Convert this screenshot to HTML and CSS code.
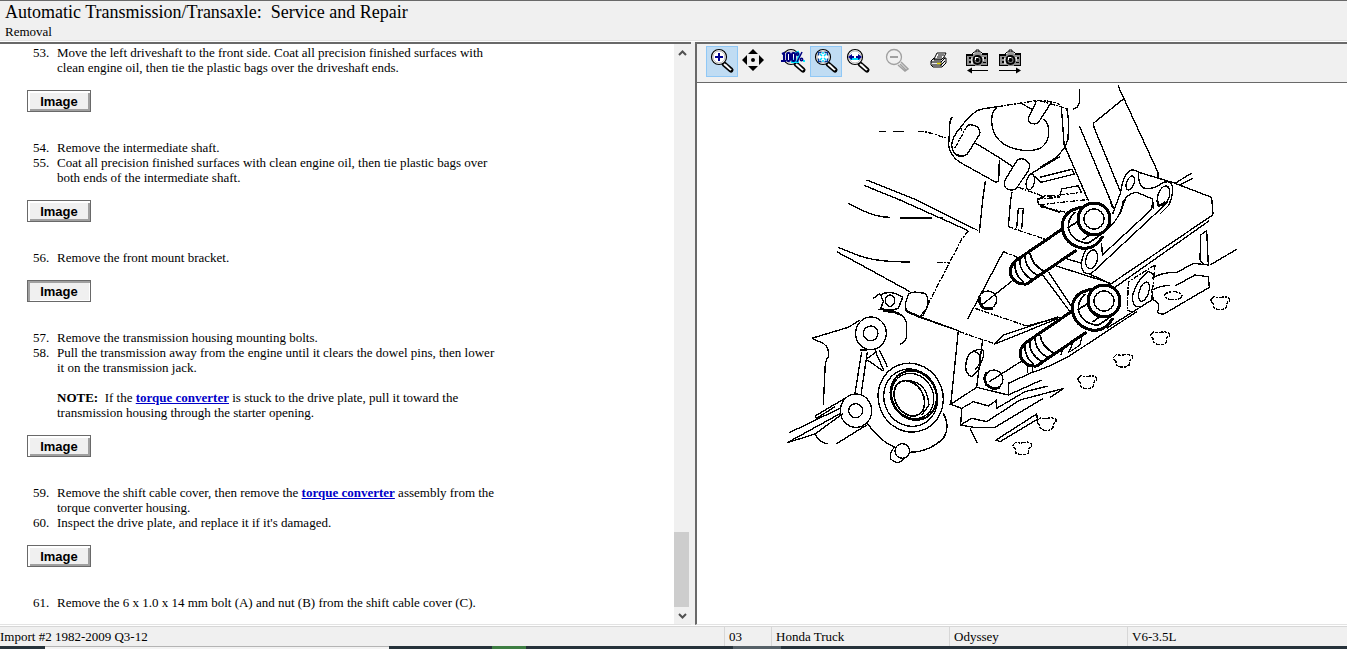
FILE: index.html
```html
<!DOCTYPE html>
<html lang="en">
<head>
<meta charset="utf-8">
<title>Automatic Transmission/Transaxle: Service and Repair</title>
<link rel="stylesheet" href="styles.css">
</head>
<body>
<header class="header">
  <h1 class="title">Automatic Transmission/Transaxle:&nbsp; Service and Repair</h1>
  <p class="subtitle">Removal</p>
</header>
<main class="panes">
  <section class="article">
    <div class="steps-wrap">
      <ol class="steps">
        <li class="step"><span class="num">53.</span><p>Move the left driveshaft to the front side. Coat all precision finished surfaces with clean engine oil, then tie the plastic bags over the driveshaft ends.</p></li>
      </ol>
      <button class="image-btn" type="button">Image</button>
      <ol class="steps">
        <li class="step"><span class="num">54.</span><p>Remove the intermediate shaft.</p></li>
        <li class="step"><span class="num">55.</span><p>Coat all precision finished surfaces with clean engine oil, then tie plastic bags over both ends of the intermediate shaft.</p></li>
      </ol>
      <button class="image-btn" type="button">Image</button>
      <ol class="steps">
        <li class="step"><span class="num">56.</span><p>Remove the front mount bracket.</p></li>
      </ol>
      <button class="image-btn pressed" type="button">Image</button>
      <ol class="steps">
        <li class="step"><span class="num">57.</span><p>Remove the transmission housing mounting bolts.</p></li>
        <li class="step"><span class="num">58.</span><div><p>Pull the transmission away from the engine until it clears the dowel pins, then lower it on the transmission jack.</p><p class="note"><b>NOTE:</b>&nbsp; If the <a href="#tc">torque converter</a> is stuck to the drive plate, pull it toward the transmission housing through the starter opening.</p></div></li>
      </ol>
      <button class="image-btn" type="button">Image</button>
      <ol class="steps">
        <li class="step"><span class="num">59.</span><p>Remove the shift cable cover, then remove the <a href="#tc">torque converter</a> assembly from the torque converter housing.</p></li>
        <li class="step"><span class="num">60.</span><p>Inspect the drive plate, and replace it if it's damaged.</p></li>
      </ol>
      <button class="image-btn" type="button">Image</button>
      <ol class="steps">
        <li class="step"><span class="num">61.</span><p>Remove the 6 x 1.0 x 14 mm bolt (A) and nut (B) from the shift cable cover (C).</p></li>
      </ol>
    </div>
    <div class="scrollbar">
      <button class="scroll-btn" type="button" aria-label="Scroll up"><svg width="9" height="6" viewBox="0 0 9 6"><path d="M1 5l3.500-3.500L8 5" fill="none" stroke="#505050" stroke-width="2"/></svg></button>
      <div class="track"><div class="thumb"></div></div>
      <button class="scroll-btn" type="button" aria-label="Scroll down"><svg width="9" height="6" viewBox="0 0 9 6"><path d="M1 1l3.500 3.500L8 1" fill="none" stroke="#505050" stroke-width="2"/></svg></button>
    </div>
  </section>
  <section class="viewer">
    <svg class="defs" width="0" height="0" aria-hidden="true">
      <defs>
        <g id="glass">
          <path d="M17 17l7 6" stroke="#000" stroke-width="5" stroke-linecap="round"/>
          <path d="M17 17l7 6" stroke="#fff" stroke-width="2"/>
          <path d="M19 17l6 6" stroke="#777" stroke-width="1"/>
          <circle cx="12" cy="10" r="7.500" fill="#fff" stroke="#000" stroke-width="1.200"/>
          <circle cx="12" cy="10" r="6" fill="none" stroke="#b8b8b8"/>
        </g>
        <g id="camera">
          <path d="M6 5l2-2h7l3 3M10 3V1h3v2" fill="none" stroke="#000"/>
          <path d="M9 3h5l2 3H8z" fill="#999"/>
          <path d="M0 5h22v12H0z" fill="#909090"/>
          <path d="M0 5h7v2H0zM16 4h6v2h-6zM3 8h2v2H3zM3 12h2v2H3zM0 16h9v1H0zM15 16h7v1h-7zM18 8h2v2h-2zM17 13h3v1h-3zM21 6h1v11h-1zM0 7h1v10H0z" fill="#000"/>
          <path d="M5 9h2v6H5zM16 8h2v4h-2z" fill="#ddd"/>
          <circle cx="11.500" cy="11" r="5" fill="#000"/>
          <circle cx="11.500" cy="11" r="3" fill="#888"/>
          <circle cx="11.500" cy="11" r="2" fill="#000"/>
          <path d="M9 8h3v1h-2v2H9z" fill="#fff"/>
        </g>
      </defs>
    </svg>
    <div class="toolbar">
      <button class="tool active" type="button" aria-label="Zoom in"><svg viewBox="0 0 30 29"><use href="#glass"/><path d="M12 6v8M8 10h8" stroke="#000090" stroke-width="2"/></svg></button>
      <button class="tool gap-after" type="button" aria-label="Pan"><svg viewBox="0 0 30 29"><path d="M14 2l5 5H9zM14 24l5-5H9zM3 13l5-5v10zM25 13l-5-5v10zM12 13a2 2 0 1 0 4 0a2 2 0 1 0-4 0" fill="#000"/></svg></button>
      <button class="tool" type="button" aria-label="Zoom to 100%"><svg viewBox="0 0 30 29"><use href="#glass"/><path d="M17 6l2-1 1 3-2 7-3-1zM12 15h8M24 14h2" stroke="#00e8ff" stroke-width="2" fill="none"/><g fill="none" stroke="#000080" stroke-width="2"><path d="M3 7l2-1v8M2 14h5"/><rect x="8" y="6" width="3" height="8" rx="1"/><rect x="13" y="6" width="3" height="8" rx="1"/><path d="M23 5l-5 10" stroke-width="1.500"/><circle cx="18.500" cy="7" r="1.200" stroke-width="1.500"/><circle cx="22.500" cy="12.500" r="1.200" stroke-width="1.500"/></g></svg></button>
      <button class="tool active" type="button" aria-label="Fit to window"><svg viewBox="0 0 30 29"><use href="#glass"/><g fill="none"><path d="M9 7l2 2M15 7l-2 2M9 13l2-2M15 13l-2-2M12 5v2M12 13v2" stroke="#00dcff" stroke-width="1.500"/><path d="M7.500 8.500v-3h3M13.500 5.500h3v3M7.500 11.500v3h3M13.500 14.500h3v-3" stroke="#0a3f9c" stroke-width="1.300"/></g></svg></button>
      <button class="tool gap-after" type="button" aria-label="Fit width"><svg viewBox="0 0 30 29"><use href="#glass"/><path d="M7 12h10" stroke="#00dcff" stroke-width="2"/><path d="M5 10l4-3v2h2v2H9v2zM19 10l-4-3v2h-2v2h2v2z" fill="#000090"/></svg></button>
      <button class="tool gap-after" type="button" aria-label="Zoom out" disabled><svg viewBox="0 0 30 29"><g fill="none" stroke="#a0a0a0"><circle cx="11" cy="10" r="7.500" stroke-width="1.300"/><path d="M15 18l7 6 3-2-7-7M17 17l6 6" stroke-width="1.500"/><path d="M7 10h8" stroke-width="2"/></g></svg></button>
      <button class="tool gap-after" type="button" aria-label="Print"><svg viewBox="0 0 30 29"><g transform="translate(4 -1)"><path d="M10 7h9l-3 6H7z" fill="#fff" stroke="#000"/><path d="M11 9h6M10 11h5" stroke="#000"/><path d="M7 12L4 15v4l2 2h9l4-4v-5h-3l-2 2H7z" fill="#e8e8e8" stroke="#000"/><path d="M4 16h10l4-4M5 19h9l4-4M14 16v4" stroke="#000" fill="none"/><path d="M10 17.500h4" stroke="#e4d800" stroke-width="1.500"/></g></svg></button>
      <button class="tool" type="button" aria-label="Previous image"><svg viewBox="0 0 30 29"><use href="#camera" x="3" y="2"/><path d="M25 23.500H9" stroke="#000"/><path d="M4 23.500l5-3v6z"/></svg></button>
      <button class="tool" type="button" aria-label="Next image"><svg viewBox="0 0 30 29"><use href="#camera" x="4" y="2"/><path d="M4 23.500h18" stroke="#000"/><path d="M26 23.500l-5-3v6z"/></svg></button>
    </div>
    <div class="canvas">
      <svg class="diagram" viewBox="782 84 480 384" role="img" aria-label="Transmission housing mounting bolts">
        <defs>
          <path id="nut" d="M-28-8L-20-16L-5-14L14-17L28-12V-4L21 0L18 16L8 21H-8L-19 16L-21 4L-28-2Z" stroke-dasharray="14 3 8 3"/>
          <g id="bolt">
            <path d="M610 85L470 180Q445 200 452 225Q465 255 500 252L650 150" fill="#fff" stroke-width="9"/>
            <path d="M465 187Q462 225 492 248M480 175Q475 215 517 240M495 165Q495 207 535 227M510 158Q515 195 553 214" stroke-width="5"/>
            <path d="M665 22Q610 30 606 78Q612 138 675 146Q715 140 728 108" fill="#fff" stroke-width="9"/>
            <circle cx="702" cy="57" r="48" fill="#fff" stroke-width="9"/>
            <path d="M645 36Q622 60 625 84Q635 124 684 130L728 100M645 30L660 22M625 82L655 64M668 120L690 104M655 40V66Q662 92 700 105" stroke-width="5"/>
            <circle cx="702" cy="57" r="30"/>
          </g>
        </defs>
        <g class="ink">
          <g transform="translate(860 84) scale(.33333)">
            <path d="M57 143h22M98 143h34M277 98Q268 110 269 130L266 185Q270 215 300 235L408 295L416 292L418 228M302 130Q275 160 275 185Q278 210 300 218M302 130Q320 105 350 80L372 74L412 68Q393 85 395 115Q400 170 450 190Q510 210 545 190Q570 170 566 135Q562 110 550 105M530 50L508 95Q500 110 512 117Q532 125 540 108L574 55M480 56L516 76M302 130L306 140"/>
            <path d="M322 125Q335 118 353 130Q363 140 358 152L322 210Q308 222 292 212M346 177L416 220L458 248M472 228Q488 218 505 235Q512 245 505 260L470 312Q455 325 438 312Q428 300 437 285ZM508 272L600 218M525 276L540 293L552 292"/>
            <ellipse cx="511" cy="294" rx="12" ry="24" transform="rotate(12 511 294)"/>
            <path d="M376 292L368 348M456 325L452 348M20 288L170 348M12 304L120 348M-36 358L0 375M532 345L535 360L570 375L600 385"/>
            <path class="dash" d="M175 142L200 144L262 163M412 68L530 50Q570 48 600 62M322 125L283 195M475 310L545 335L600 338M532 345L600 340"/>
          </g>
          <g transform="translate(1040 84) scale(.33333)">
            <path d="M118 15V55Q115 72 100 75M64 68L73 190M80 72L86 110L84 165L76 188L50 220L0 250M118 125L222 375M234 5L354 265V282M250 45L160 118L162 130L242 325M75 188L145 350"/>
            <path d="M0 280L95 256L103 270L0 296M60 332L65 315L115 305L125 325M218 390L242 325Q250 265 275 258Q285 256 300 266L400 296L515 340L519 390M296 265Q293 300 310 312Q340 318 365 298Q398 282 398 320Q396 345 385 365L360 390M240 390L258 340Q270 328 290 325L338 345L340 375M405 298L455 267M420 302L458 283"/>
            <ellipse cx="271" cy="297" rx="11" ry="22" transform="rotate(20 271 297)"/>
            <ellipse cx="371" cy="335" rx="17" ry="30" transform="rotate(18 371 335)"/>
            <path class="dash" d="M0 50L85 75M0 340L125 325M0 362L140 347M0 368L80 385"/>
          </g>
          <g transform="translate(860 200) scale(.33333)">
            <path d="M170 0L355 92M120 0L325 92M368 0L358 98M430 155L323 357M452 0L445 80M470 85L475 25H490L485 88M-36 10L0 28Q50 52 90 52M120 54H215M-66 142L0 168Q50 186 150 186M-70 155L0 193L150 275M500 378L600 352M548 225L630 335M565 215L638 325"/>
            <path d="M148 280L165 276L195 280Q208 290 202 320L190 345L178 352L140 335Q130 310 148 280M178 352L290 390M62 285Q80 272 110 282L128 292L115 325Q90 335 62 325L70 305ZM40 295L60 280M55 328Q125 330 135 360"/>
            <ellipse cx="90" cy="302" rx="14" ry="17"/>
            <circle cx="383" cy="300" r="27"/>
            <path d="M359 290Q354 315 375 326L398 326" stroke-width="8"/>
            <path d="M365 315L460 240"/>
            <path class="dash" d="M325 92L305 118L200 320M430 155L480 175M445 80L555 118V135M345 325L500 378M232 53h20M232 188h35"/>
          </g>
          <g transform="translate(1040 200) scale(.33333)">
            <path d="M185 130L187 165L335 28L338 0M140 145Q115 190 130 215Q145 228 160 215L385 5M145 220L212 252L518 45V0M225 262L508 62M40 195L212 250M75 175L125 190M212 0Q212 20 225 30M250 0Q245 50 205 85M350 0L355 20L375 5"/>
            <ellipse cx="155" cy="178" rx="17" ry="29" transform="rotate(15 155 178)"/>
            <path d="M500 92L505 195L490 192L480 180L482 105ZM510 195L590 148M335 235Q370 215 410 218L460 190L505 195M405 258L465 225L505 230L508 262L370 343L352 338Q365 310 340 300L335 270Q370 255 390 256M200 385L340 297M300 320Q275 325 278 285Q290 240 325 215L345 225"/>
            <path class="dash" d="M345 195L265 245L262 330L280 338M345 195L335 298"/>
            <ellipse cx="312" cy="275" rx="14" ry="30" transform="rotate(18 312 275)"/>
            <ellipse class="dash" cx="400" cy="287" rx="26" ry="12"/>
          </g>
          <g transform="translate(780 310) scale(.33333)">
            <path d="M95 85L205 52L240 30M95 85L130 100Q150 115 145 140Q135 150 135 180L130 285M245 125L225 250M262 125L243 255M240 120H262M262 150L308 182M285 122L312 182M298 120L322 170M262 145L290 125"/>
            <ellipse cx="273" cy="70" rx="46" ry="49"/><circle cx="272" cy="70" r="22"/>
            <ellipse cx="228" cy="302" rx="47" ry="50"/><circle cx="227" cy="302" r="21"/>
            <path d="M195 265L105 318L110 325L165 290M180 295L28 368M22 398L182 310M22 398L105 372L190 310M105 372Q120 400 145 402M168 402L260 345M262 340Q300 395 345 412M345 410Q325 430 333 448Q355 468 372 445M390 427Q450 425 490 385Q512 350 490 310M375 0L420 20L435 0M345 10Q385 15 380 60Q385 95 360 103"/>
            <path d="M310 2L345 6" stroke-width="8"/>
            <circle cx="367" cy="423" r="22"/>
            <ellipse cx="392" cy="263" rx="97" ry="104" transform="rotate(-20 392 263)"/>
            <ellipse cx="392" cy="263" rx="80" ry="87" transform="rotate(-20 392 263)"/>
            <ellipse cx="401" cy="256" rx="67" ry="76" transform="rotate(-30 401 256)" stroke-width="6"/>
            <ellipse cx="398" cy="258" rx="61" ry="70" transform="rotate(-30 398 258)"/>
            <ellipse cx="388" cy="265" rx="42" ry="56" transform="rotate(-30 388 265)" stroke-width="5"/>
            <path d="M365 212Q440 205 447 285L425 315M420 20L535 62L512 285"/>
          </g>
          <g transform="translate(940 310) scale(.33333)">
            <path d="M165 102L190 75L355 20M165 102L355 25M128 88L110 232L32 283L65 295L62 345M80 150Q85 125 115 118Q135 115 130 140L115 180L95 200Q70 190 80 150M100 125Q125 125 120 160L105 180M262 160V190M278 160V186M205 255V220L270 190Q330 170 385 140L590 5M430 60L420 105L390 125M375 105L362 135M400 95L385 130"/>
            <path d="M110 232L205 255L305 210M255 245L325 228M65 295L100 275L145 288L168 272L170 295L255 245M372 235L240 270L140 335L95 325L62 345L100 352H165L310 265M330 262L372 235M90 355L112 400M168 390L290 312L292 328L180 395Z"/>
            <path class="dash" d="M58 65L165 102"/>
            <circle cx="161" cy="208" r="28"/>
            <path d="M140 187Q128 205 140 225L160 236L180 233" stroke-width="8"/>
            <path d="M148 215L250 150"/>
            <use href="#nut" x="549" y="150"/><use href="#nut" x="442" y="214"/><use href="#nut" x="320" y="340"/><use href="#nut" x="247" y="413"/><use href="#nut" x="660" y="82"/><use href="#nut" x="841" y="-23"/>
          </g>
          <g transform="translate(860 200) scale(.33333)"><use href="#bolt"/><use href="#bolt" x="30" y="246"/></g>
        </g>
      </svg>
    </div>
  </section>
</main>
<footer class="status">
  <span class="cell first">Import #2 1982-2009 Q3-12</span>
  <span class="cell">03</span>
  <span class="cell">Honda Truck</span>
  <span class="cell">Odyssey</span>
  <span class="cell">V6-3.5L</span>
</footer>
<div class="taskbar"><i class="light"></i><i class="dark"></i><i class="green"></i><i class="dark"></i><i class="gray"></i></div>
</body>
</html>
```
FILE: styles.css
```css
* { box-sizing: border-box; }
body {
  margin: 0;
  height: 100vh;
  overflow: hidden;
  display: flex;
  flex-direction: column;
  background: #fff;
  color: #000;
  font: 13px/15px "Liberation Serif", serif;
}
p, h1, ol { margin: 0; padding: 0; }
button { font: inherit; color: inherit; margin: 0; padding: 0; border: 0; background: none; }

.header {
  flex: none;
  background: #f0f0f0;
  border-top: 1px solid #696969;
  border-bottom: 1px solid #fff;
  box-shadow: inset 0 -1px #e3e3e3;
  padding: 0 5px 1px;
}
.title { font-size: 18px; line-height: 22px; font-weight: normal; }
.subtitle { line-height: 17px; }

.panes { flex: 1; min-height: 0; display: flex; }
.article {
  flex: 0 0 calc(51.6% - 4px);
  display: flex;
  overflow: hidden;
  border-top: 2px solid #696969;
  border-bottom: 1px solid #e3e3e3;
}
.steps-wrap { flex: 1; padding: 1px 0 0 27px; overflow: hidden; }
.steps { list-style: none; width: 474px; padding-left: 6px; }
.step { display: grid; grid-template-columns: 24px 1fr; }
.note { margin-top: 15px; }
a { color: #0000c8; font-weight: bold; }
.image-btn {
  display: block;
  width: 64px;
  height: 22px;
  margin: 15px 0 28px;
  padding-top: 1px;
  border: 1px solid #696969;
  background: #f0f0f0;
  box-shadow: inset 2px 2px #fff, inset -2px -2px #a0a0a0;
  font: bold 13px/19px "Liberation Sans", sans-serif;
}
.image-btn.pressed { box-shadow: inset 2px 2px #a0a0a0, inset -1px -1px #fff; }

.scrollbar { flex: none; width: 17px; display: flex; flex-direction: column; background: #f0f0f0; }
.scroll-btn { height: 17px; display: grid; place-items: center; padding-right: 1px; }
.track { flex: 1; display: flex; flex-direction: column; justify-content: flex-end; }
.thumb { height: 75px; width: 15px; background: #cdcdcd; }

.viewer {
  flex: 1;
  min-width: 0;
  display: flex;
  flex-direction: column;
  margin-left: 4px;
  border-top: 2px solid #696969;
  border-left: 2px solid #696969;
  border-bottom: 1px solid #e3e3e3;
  outline: 4px solid #f0f0f0;
  clip-path: inset(0 0 0 -4px);
}
.defs { display: block; flex: none; }
.toolbar {
  flex: none;
  display: flex;
  background: #f0f0f0;
  border-bottom: 1px solid #696969;
  padding: 2px 9px 5px;
}
.tool { width: 32px; height: 31px; border: 1px solid transparent; }
.tool svg { display: block; width: 30px; height: 29px; }
.tool.active { background: #c0dcf3; border-color: #90c8f6; }
.tool.gap-after { margin-right: 8px; }

.canvas { flex: 1; min-height: 0; display: flex; justify-content: center; padding-top: 1px; }
.diagram { width: 74%; max-width: 480px; height: 384px; }
.ink { fill: none; stroke: #000; stroke-width: 4; shape-rendering: crispEdges; }
.dash { stroke-dasharray: 16 4 6 4; }

.status {
  flex: none;
  display: grid;
  grid-template-columns: 724fr 47fr 178fr 178fr 220fr;
  margin-top: 1px;
  border-top: 1px solid #d7d7d7;
  background: #f0f0f0;
}
.cell { border-left: 1px solid #d7d7d7; padding: 1px 4px 0; line-height: 18px; white-space: nowrap; }
.cell.first { border: 0; padding-left: 0; }

.taskbar { flex: none; height: 3px; display: flex; background: #26323a; padding-left: 45px; }
.light { width: 344px; background: #f3f3f3; border-top: 1px solid #b4b4b4; }
.taskbar .dark { width: 103px; }
.green { width: 34px; background: #3d7d42; }
.green + .dark { width: 207px; }
.gray { width: 48px; background: #566168; }
```
